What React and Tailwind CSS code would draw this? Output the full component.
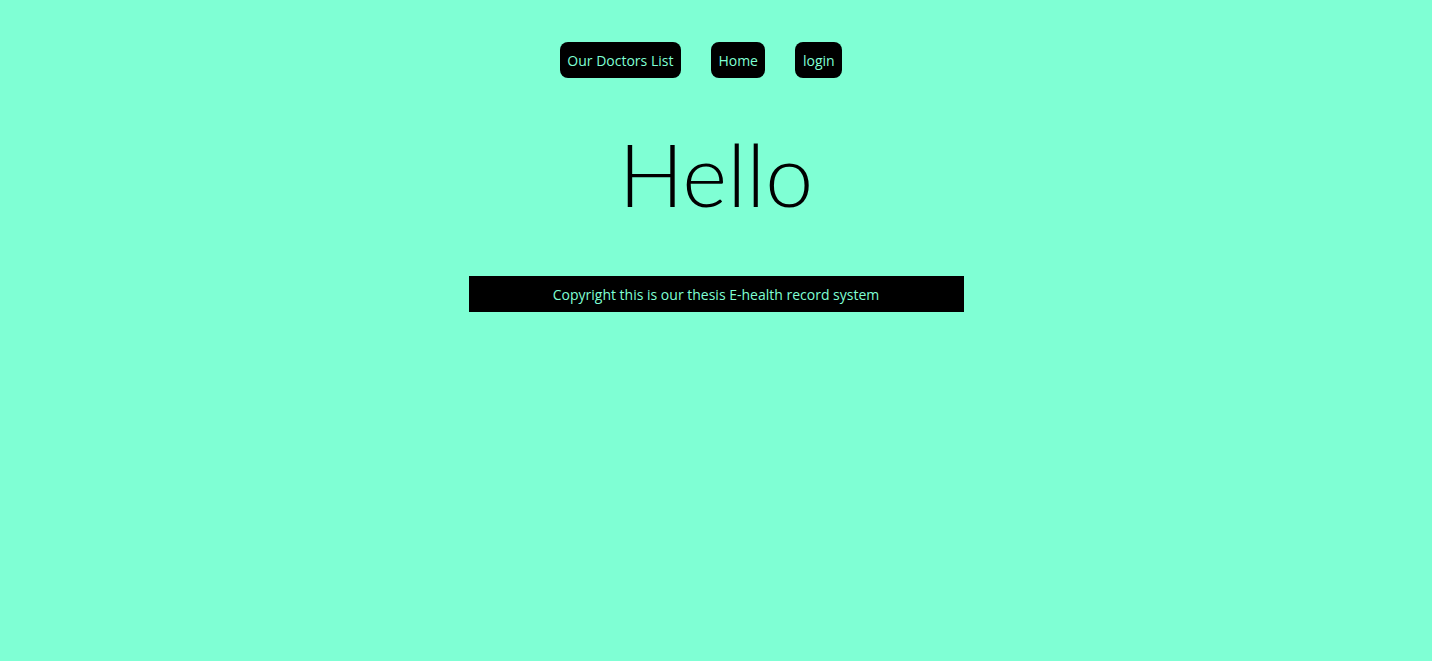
export default function App() {
  const links = ['Our Doctors List', 'Home', 'login'];

  return (
    <div className="min-h-[661px] bg-[#7fffd4] font-['Open_Sans',sans-serif]">
      {/* nav */}
      <nav className="flex justify-center pt-[42px]">
        {links.map((l) => (
          <a
            key={l}
            href="#"
            className="h-9 mr-[30px] px-[7.5px] flex items-center rounded-lg bg-black text-[#7fffd4] text-[14px]"
          >
            {l}
          </a>
        ))}
      </nav>

      <h1 className="mt-[36px] text-center text-[86px] leading-[120px] font-light text-black font-['Lato',sans-serif]">
        Hello
      </h1>

      <footer className="mx-auto mt-[42px] w-[495px] h-9 bg-black flex items-center justify-center text-[14px] text-[#7fffd4]">
        Copyright this is our thesis E-health record system
      </footer>
    </div>
  );
}
